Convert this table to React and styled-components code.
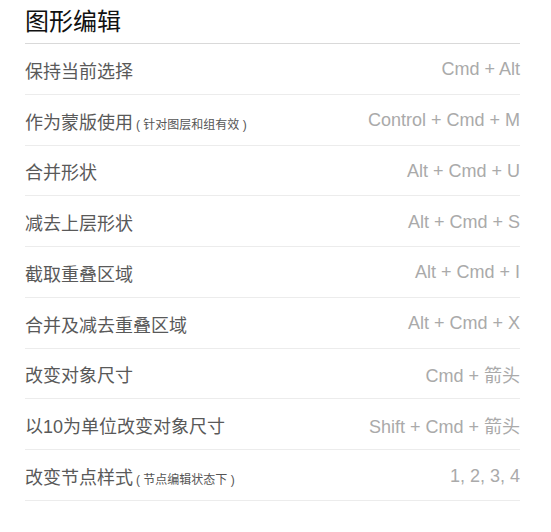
import React from 'react';
import styled, { createGlobalStyle } from 'styled-components';

const GlobalStyle = createGlobalStyle`
  html, body {
    margin: 0;
    padding: 0;
    background: #fff;
  }
  body {
    font-family: "Liberation Sans", Arial, "Noto Sans CJK SC", sans-serif;
  }
`;

const Wrapper = styled.div`
  width: 495px;
  padding: 0 31px 0 25px;
`;

const Title = styled.h2`
  margin: 0;
  padding: 4px 0 3px;
  font-size: 24px;
  line-height: 36px;
  font-weight: 400;
  color: #111;
  border-bottom: 1px solid #d9d9d9;
`;

const List = styled.ul`
  list-style: none;
  margin: 0;
  padding: 0;
`;

const Row = styled.li`
  display: flex;
  align-items: center;
  justify-content: space-between;
  box-sizing: border-box;
  height: 50.78px;
  padding-top: 2px;
  border-bottom: 1px solid #ececec;
`;

const Label = styled.span`
  font-size: 18px;
  color: #595959;
  white-space: nowrap;
`;

const Note = styled.span`
  margin-left: 3px;
  font-size: 12px;
  color: #555;
  white-space: pre;
`;

const Keys = styled.span`
  font-size: 18px;
  color: #aaa;
  white-space: nowrap;
`;

const shortcuts = [
  { label: '保持当前选择', keys: 'Cmd + Alt' },
  { label: '作为蒙版使用', note: '( 针对图层和组有效 )', keys: 'Control + Cmd + M' },
  { label: '合并形状', keys: 'Alt + Cmd + U' },
  { label: '减去上层形状', keys: 'Alt + Cmd + S' },
  { label: '截取重叠区域', keys: 'Alt + Cmd + I' },
  { label: '合并及减去重叠区域', keys: 'Alt + Cmd + X' },
  { label: '改变对象尺寸', keys: 'Cmd + 箭头' },
  { label: '以10为单位改变对象尺寸', keys: 'Shift + Cmd + 箭头' },
  { label: '改变节点样式', note: '( 节点编辑状态下 )', keys: '1, 2, 3, 4' },
];

const App = () => {
  return (
    <>
      <GlobalStyle />
      <Wrapper>
        <Title>图形编辑</Title>
        <List>
          {shortcuts.map((item) => (
            <Row key={item.label}>
              <Label>
                {item.label}
                {item.note && <Note>{item.note}</Note>}
              </Label>
              <Keys>{item.keys}</Keys>
            </Row>
          ))}
        </List>
      </Wrapper>
    </>
  );
};

export default App;
